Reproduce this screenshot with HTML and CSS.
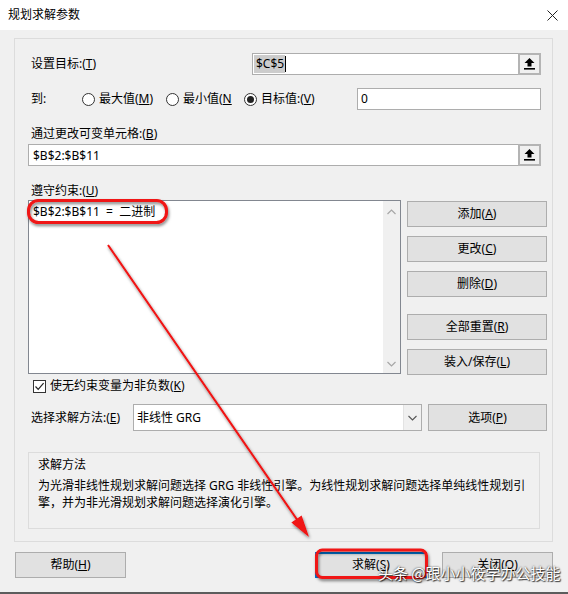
FILE: index.html
```html
<!DOCTYPE html>
<html lang="zh-CN">
<head>
<meta charset="utf-8">
<title>规划求解参数</title>
<link rel="stylesheet" href="styles.css">
</head>
<body>
<div class="window">
  <div class="titlebar">
    <span class="title">规划求解参数</span>
    <svg class="close" width="11" height="11" viewBox="0 0 11 11"><path d="M0.5 0.5 L10.5 10.5 M10.5 0.5 L0.5 10.5" stroke="#222" stroke-width="1" fill="none"/></svg>
  </div>
  <div class="content">
    <div class="group">
      <div class="row r-target">
        <span class="lbl">设置目标:(<u>T</u>)</span>
        <div class="refbox w-target">
          <div class="refinput"><span class="sel">$C$5</span><span class="caret"></span></div>
          <div class="refbtn"><svg width="11" height="12" viewBox="0 0 11 12"><path d="M5.5 0 L0.5 5 H3.5 V8.5 H7.5 V5 H10.5 Z" fill="#000"/><rect x="0" y="10" width="11" height="1.6" fill="#000"/></svg></div>
        </div>
      </div>
      <div class="row r-to">
        <span class="lbl to-lbl">到:</span>
        <span class="radio r1"><span class="rcircle"></span><span>最大值(<u>M</u>)</span></span>
        <span class="radio r2"><span class="rcircle"></span><span>最小值(<u>N</u></span></span>
        <span class="radio r3"><span class="rcircle on"></span><span>目标值:(<u>V</u>)</span></span>
        <div class="valbox">0</div>
      </div>
      <div class="lbl lbl-b">通过更改可变单元格:(<u>B</u>)</div>
      <div class="refbox w-full">
        <div class="refinput plain">$B$2:$B$11</div>
        <div class="refbtn"><svg width="11" height="12" viewBox="0 0 11 12"><path d="M5.5 0 L0.5 5 H3.5 V8.5 H7.5 V5 H10.5 Z" fill="#000"/><rect x="0" y="10" width="11" height="1.6" fill="#000"/></svg></div>
      </div>
      <div class="lbl lbl-u">遵守约束:(<u>U</u>)</div>
      <div class="constraints">
        <div class="list">
          <div class="list-items">$B$2:$B$11 &nbsp;=&nbsp; 二进制</div>
          <div class="scroll">
            <svg width="9" height="6" viewBox="0 0 9 6"><path d="M0.5 5 L4.5 1 L8.5 5" stroke="#a6a6a6" stroke-width="1.2" fill="none"/></svg>
            <svg width="9" height="6" viewBox="0 0 9 6"><path d="M0.5 1 L4.5 5 L8.5 1" stroke="#a6a6a6" stroke-width="1.2" fill="none"/></svg>
          </div>
        </div>
        <div class="btncol">
          <div class="btn"><span>添加(<u>A</u>)</span></div>
          <div class="btn"><span>更改(<u>C</u>)</span></div>
          <div class="btn"><span>删除(<u>D</u>)</span></div>
          <div class="btn gap-lg"><span>全部重置(<u>R</u>)</span></div>
          <div class="btn"><span>装入/保存(<u>L</u>)</span></div>
        </div>
      </div>
      <div class="row r-check">
        <span class="cbox"><svg width="11" height="11" viewBox="0 0 11 11"><path d="M1.5 5.5 L4.2 8.3 L9.6 2.2" stroke="#222" stroke-width="1.2" fill="none"/></svg></span>
        <span>使无约束变量为非负数(<u>K</u>)</span>
      </div>
      <div class="row r-method">
        <span class="lbl method-lbl">选择求解方法:(<u>E</u>)</span>
        <div class="combo">
          <span class="combo-text">非线性 GRG</span>
          <span class="combo-arrow"><svg width="9" height="6" viewBox="0 0 9 6"><path d="M0.5 1 L4.5 5 L8.5 1" stroke="#555" stroke-width="1.1" fill="none"/></svg></span>
        </div>
        <div class="btn opt-btn"><span>选项(<u>P</u>)</span></div>
      </div>
      <div class="desc">
        <div class="desc-title">求解方法</div>
        <div class="desc-text">为光滑非线性规划求解问题选择 GRG 非线性引擎。为线性规划求解问题选择单纯线性规划引<br>擎，并为非光滑规划求解问题选择演化引擎。</div>
      </div>
    </div>
    <div class="footer">
      <div class="btn fbtn help-btn"><span>帮助(<u>H</u>)</span></div>
      <div class="btn fbtn solve-btn"><span>求解(<u>S</u>)</span></div>
      <div class="btn fbtn close-btn"><span>关闭(<u>O</u>)</span></div>
    </div>
  </div>
  <svg class="annot" width="568" height="594" viewBox="0 0 568 594">
    <defs>
      <filter id="sh" x="-20%" y="-20%" width="140%" height="150%">
        <feDropShadow dx="1" dy="2" stdDeviation="1.4" flood-color="#000" flood-opacity="0.5"/>
      </filter>
    </defs>
    <g filter="url(#sh)">
      <rect x="28.5" y="200.5" width="138" height="22" rx="10" fill="none" stroke="#f01212" stroke-width="3"/>
      <rect x="316.5" y="550" width="110" height="27.5" rx="6" fill="none" stroke="#f01212" stroke-width="3"/>
      <line x1="108" y1="245" x2="298" y2="521" stroke="#f01212" stroke-width="2"/>
      <polygon points="309,537 291.4,522.6 301.6,515.4" fill="#f01212"/>
    </g>
  </svg>
  <div class="watermark">头条 @跟小小筱学办公技能</div>
</div>
</body>
</html>
```

FILE: styles.css
```css
* { box-sizing: border-box; }

body {
  margin: 0;
  font-family: "Noto Sans", "Noto Sans CJK SC", sans-serif;
  font-size: 12px;
  color: #000;
  background: #f0f0f0;
}

u { text-decoration: underline; text-underline-offset: 1px; }

.window {
  position: relative;
  width: 568px;
  height: 594px;
  background: #f0f0f0;
  overflow: hidden;
  border-bottom: 2px solid #5c5c5c;
}

.titlebar {
  height: 30px;
  background: #fff;
  display: flex;
  align-items: center;
  justify-content: space-between;
  padding: 0 10px 0 8px;
}
.title { line-height: 16px; }

.content { padding: 8px 15px 0 14px; }

.group {
  border: 1px solid #dcdcdc;
  height: 504px;
  padding: 14px 5px 0 13px;
}

.row { display: flex; align-items: center; }
.lbl { padding-left: 3px; line-height: 16px; white-space: nowrap; }

.r-target { height: 22px; }

.refbox {
  display: flex;
  height: 22px;
  border: 1px solid #adadad;
  background: #fff;
}
.w-target { margin-left: auto; margin-right: 6px; width: 289px; }
.w-full { margin-top: 2px; margin-right: 6px; }

.refinput { flex: 1; display: flex; align-items: center; padding-left: 1px; }
.refinput.plain { padding-left: 4px; }
.sel { background: #cccccc; height: 18px; line-height: 18px; padding: 0 1px 0 2px; }
.caret { width: 1px; height: 16px; background: #000; }

.refbtn {
  width: 23px;
  margin: -1px -1px -1px 0;
  border: 2px solid #b4b4b4;
  background: #f0f0f0;
  display: flex;
  align-items: center;
  justify-content: center;
}

.r-to { margin-top: 13px; height: 22px; }
.to-lbl { width: 54px; }
.radio { display: flex; align-items: center; gap: 4px; line-height: 16px; white-space: nowrap; }
.r1 { width: 84px; }
.r2 { width: 78px; }
.rcircle {
  width: 13px;
  height: 13px;
  border: 1px solid #333;
  border-radius: 50%;
  background: #fff;
  display: flex;
  align-items: center;
  justify-content: center;
}
.rcircle.on::after {
  content: "";
  width: 7px;
  height: 7px;
  border-radius: 50%;
  background: #222;
}
.valbox {
  margin-left: auto;
  margin-right: 6px;
  width: 184px;
  height: 22px;
  border: 1px solid #adadad;
  background: #fff;
  padding-left: 3px;
  line-height: 20px;
}

.lbl-b { margin-top: 16px; }
.lbl-u { margin-top: 17px; }

.constraints { display: flex; margin-top: 1px; }
.list {
  width: 373px;
  height: 174px;
  border: 1px solid #828790;
  background: #fff;
  display: flex;
}
.list-items { flex: 1; padding: 3px 0 0 4px; line-height: 16px; white-space: nowrap; }
.scroll {
  width: 17px;
  background: #f0f0f0;
  display: flex;
  flex-direction: column;
  justify-content: space-between;
  align-items: center;
  padding: 8px 0 6px;
}

.btncol { margin-left: 6px; width: 140px; padding-top: 1px; display: flex; flex-direction: column; }
.btn {
  height: 26px;
  border: 1px solid #adadad;
  background: #e1e1e1;
  display: flex;
  align-items: center;
  justify-content: center;
  line-height: 16px;
  white-space: nowrap;
}
.btncol .btn + .btn { margin-top: 9px; }
.btncol .btn.gap-lg { margin-top: 17px; }

.r-check { margin-top: 3px; height: 16px; gap: 4px; line-height: 16px; }
.cbox {
  margin-left: 5px;
  width: 13px;
  height: 13px;
  border: 1px solid #333;
  background: #fff;
  display: flex;
  align-items: center;
  justify-content: center;
}

.r-method { margin-top: 10px; height: 27px; }
.method-lbl { width: 105px; }
.combo {
  width: 289px;
  height: 27px;
  border: 1px solid #adadad;
  background: #fff;
  display: flex;
  align-items: center;
}
.combo-text { padding-left: 3px; flex: 1; line-height: 16px; }
.combo-arrow {
  width: 18px;
  height: 100%;
  background: #f0f0f0;
  border-left: 1px solid #e3e3e3;
  display: flex;
  align-items: center;
  justify-content: center;
}
.opt-btn { margin-left: 6px; width: 119px; height: 27px; }

.desc {
  margin-top: 21px;
  width: 512px;
  height: 77px;
  border: 1px solid #dcdcdc;
  padding: 3px 0 0 9px;
}
.desc-title { line-height: 17px; margin-bottom: 4px; }
.desc-text { line-height: 17px; white-space: nowrap; }

.footer { display: flex; margin-top: 10px; padding-left: 1px; }
.fbtn { height: 26px; }
.help-btn { width: 111px; margin-right: auto; }
.solve-btn { width: 112px; margin-right: 15px; border-color: #0078d7; box-shadow: inset 0 0 0 1px #0078d7; }
.close-btn { width: 111px; }

.annot { position: absolute; left: 0; top: 0; pointer-events: none; }

.watermark {
  position: absolute;
  left: 378px;
  top: 563px;
  font-family: "Noto Sans CJK SC", sans-serif;
  font-size: 15px;
  line-height: 20px;
  color: #fff;
  white-space: nowrap;
  text-shadow: 0 0 2px rgba(0,0,0,0.8), 1px 1px 1px rgba(0,0,0,0.7);
}
```
